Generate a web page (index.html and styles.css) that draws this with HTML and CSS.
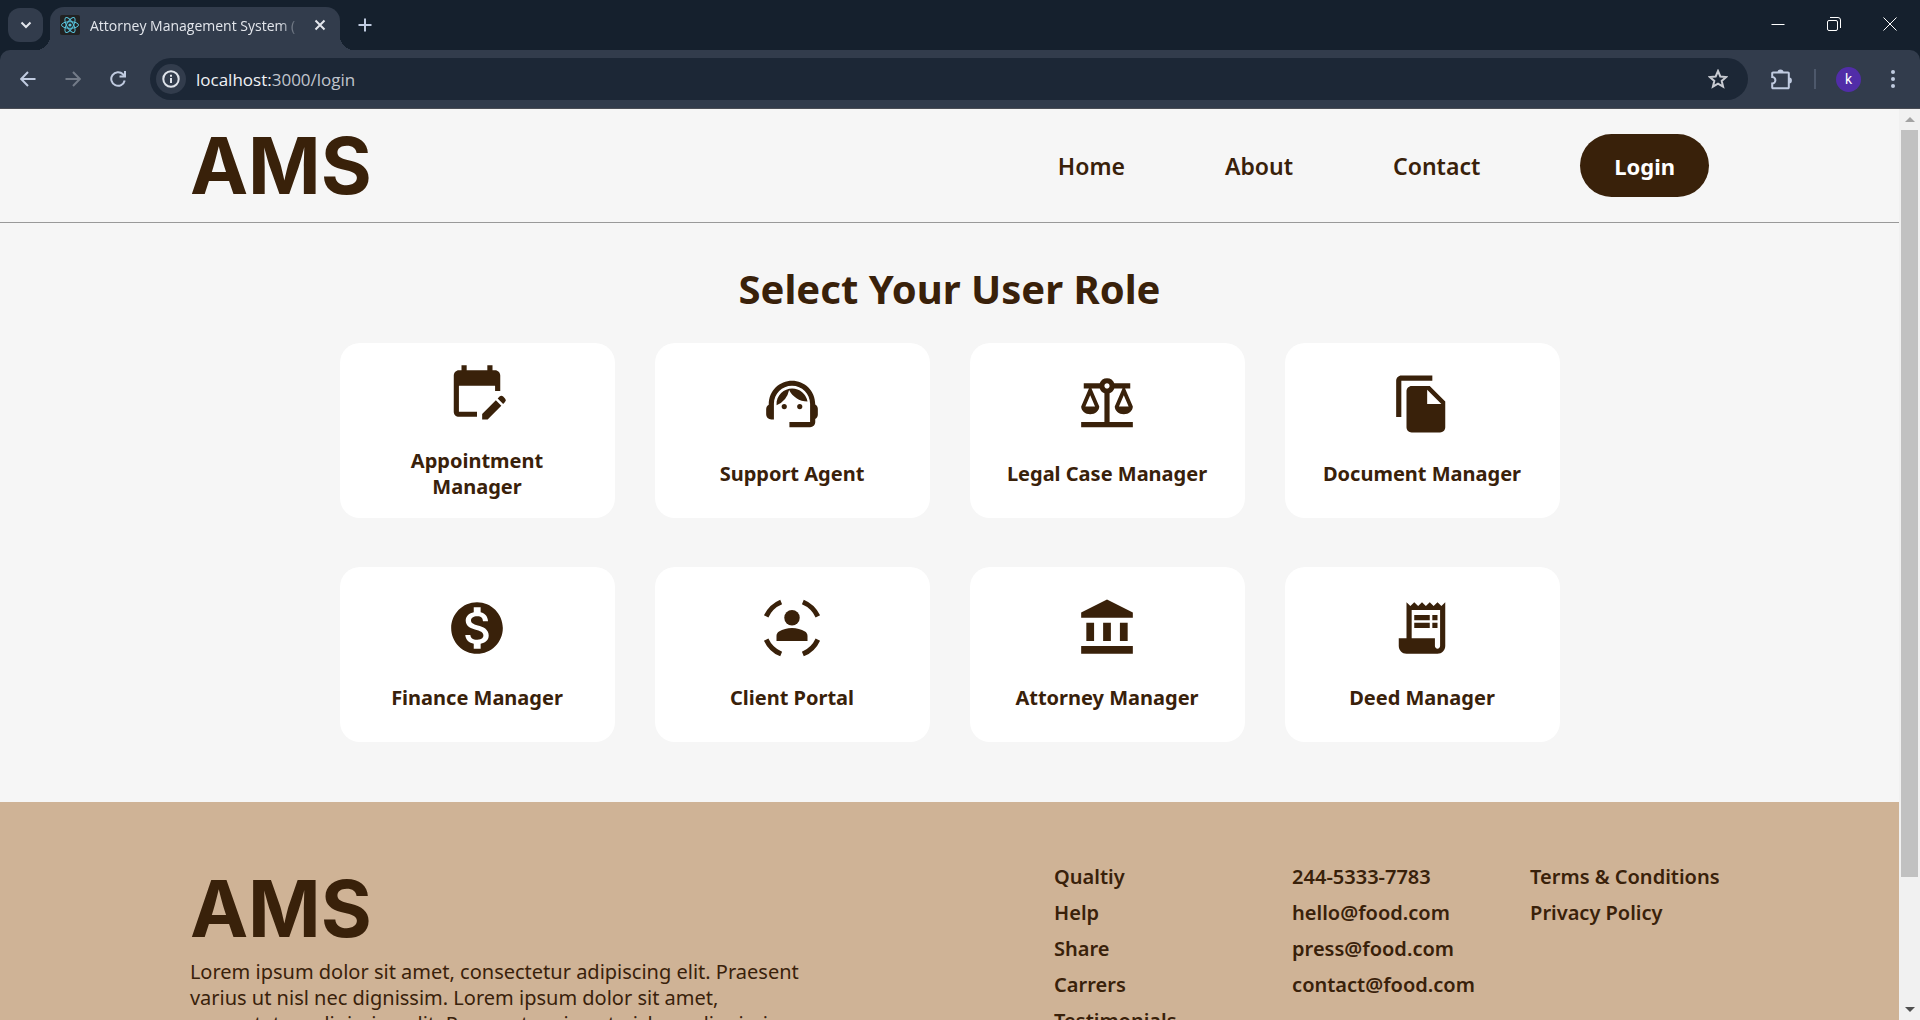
FILE: index.html
```html
<!DOCTYPE html>
<html lang="en">
<head>
<meta charset="utf-8">
<title>Attorney Management System</title>
<link rel="stylesheet" href="styles.css">
</head>
<body>
<div class="window">
  <div class="tabstrip">
    <button class="tab-search" aria-label="Search tabs"><svg width="16" height="16" viewBox="0 0 16 16" class="line thick"><path d="M3.500 5.500L8 10l4.500-4.500"/></svg></button>
    <div class="tab">
      <svg class="favicon" width="20" height="20" viewBox="0 0 20 20"><rect width="20" height="20" rx="2" fill="#222"/><g fill="none" stroke="#58c4dc" stroke-width="1"><ellipse cx="10" cy="10" rx="8.500" ry="3.300"/><ellipse cx="10" cy="10" rx="8.500" ry="3.300" transform="rotate(60 10 10)"/><ellipse cx="10" cy="10" rx="8.500" ry="3.300" transform="rotate(120 10 10)"/></g><circle cx="10" cy="10" r="1.600" fill="#58c4dc"/></svg>
      <span class="tab-title">Attorney Management System (</span>
      <button class="tab-close" aria-label="Close tab"><svg width="12" height="12" viewBox="0 0 12 12" class="line"><path d="M1.500 1.500l9 9M10.500 1.500l-9 9"/></svg></button>
    </div>
    <button class="icon-btn new-tab" aria-label="New tab"><svg width="14" height="14" viewBox="0 0 14 14" class="line"><path d="M7 .5v13M.5 7h13"/></svg></button>
    <div class="window-controls">
      <button aria-label="Minimize"><svg width="14" height="14" viewBox="0 0 14 14" class="hair"><path d="M.5 7.500h13"/></svg></button>
      <button aria-label="Restore"><svg width="14" height="14" viewBox="0 0 14 14" class="hair"><rect x=".5" y="3.500" width="10" height="10" rx="1.500"/><path d="M3 .5h8a2.500 2.500 0 0 1 2.500 2.500v8"/></svg></button>
      <button aria-label="Close"><svg width="14" height="14" viewBox="0 0 14 14" class="hair"><path d="M.5.5l13 13M13.500.5l-13 13"/></svg></button>
    </div>
  </div>

  <div class="toolbar">
    <div class="nav-buttons">
      <button class="icon-btn" aria-label="Back"><svg width="16" height="16" viewBox="0 0 16 16" class="line"><path d="M15.500 8H1.500M8 1L1.200 8 8 15"/></svg></button>
      <button class="icon-btn dim" aria-label="Forward"><svg width="16" height="16" viewBox="0 0 16 16" class="line"><path d="M.5 8h14M8 1l6.800 7L8 15"/></svg></button>
      <button class="icon-btn" aria-label="Reload"><svg width="16" height="16" viewBox="0 0 16 16" class="line"><path d="M14.700 9.500A6.800 6.800 0 1 1 13 3.300L14.800 5M15 0v5.500H9.500"/></svg></button>
    </div>
    <div class="omnibox">
      <button class="site-info" aria-label="Site information"><svg width="18" height="18" viewBox="0 0 18 18" class="line"><circle cx="9" cy="9" r="7.700"/><path d="M9 8v5M9 4.800v1.900"/></svg></button>
      <span class="url"><span class="host">localhost:</span>3000/login</span>
      <button class="icon-btn star" aria-label="Bookmark"><svg width="20" height="20" viewBox="0 0 20 20" class="line"><path d="M10 2l2.300 5.500 5.900.5-4.500 3.900 1.400 5.800L10 14.600l-5.100 3.100 1.400-5.800L1.800 8l5.900-.5z"/></svg></button>
    </div>
    <button class="icon-btn" aria-label="Extensions"><svg width="22" height="22" viewBox="0 0 22 22" class="line"><path d="M2 4.500h15a.8.8 0 0 1 .8.8V19.500a.8.8 0 0 1-.8.8H2a.8.8 0 0 1-.8-.8v-4a3.200 3.200 0 0 0 0-6.400V5.300a.8.8 0 0 1 .8-.8z"/><path d="M7.500 4a2 1.600 0 0 1 4 0zM18.300 10.500a1.600 2 0 0 1 0 4z" fill="currentColor"/></svg></button>
    <span class="divider"></span>
    <button class="avatar" aria-label="Profile">k</button>
    <button class="icon-btn" aria-label="Menu"><svg width="6" height="20" viewBox="0 0 6 20" fill="currentColor"><circle cx="3" cy="3" r="2"/><circle cx="3" cy="10" r="2"/><circle cx="3" cy="17" r="2"/></svg></button>
  </div>

  <div class="viewport">
    <div class="page">
      <header class="header">
        <a class="logo" href="#">AMS</a>
        <nav class="nav">
          <a href="#">Home</a>
          <a href="#">About</a>
          <a href="#">Contact</a>
          <button class="login">Login</button>
        </nav>
      </header>

      <main class="roles">
        <h1>Select Your User Role</h1>
        <div class="grid">
          <a class="card" href="#"><svg viewBox="0 0 24 24"><path d="M12 22H5c-1.110 0-2-.9-2-2L3.010 6c0-1.100.88-2 1.990-2h1V2h2v2h8V2h2v2h1c1.100 0 2 .9 2 2v6h-2v-2H5v10h7v2zm10.130-5.010l.71-.71a.996.996 0 0 0 0-1.410l-.71-.71a.996.996 0 0 0-1.410 0l-.71.71 2.120 2.120zm-.71.71l-5.300 5.300H14v-2.120l5.300-5.300 2.120 2.120z"/></svg><span>Appointment Manager</span></a>
          <a class="card" href="#"><svg viewBox="0 0 24 24"><path d="M21 12.220C21 6.730 16.740 3 12 3c-4.690 0-9 3.650-9 9.280-.6.34-1 .98-1 1.720v2c0 1.100.9 2 2 2h1v-6.100c0-3.870 3.130-7 7-7s7 3.130 7 7V19h-8v2h8c1.100 0 2-.9 2-2v-1.220c.59-.31 1-.92 1-1.640v-2.300c0-.7-.41-1.310-1-1.620z"/><circle cx="9" cy="13" r="1"/><circle cx="15" cy="13" r="1"/><path d="M18 11.030A6.040 6.040 0 0 0 12.050 6c-3.030 0-6.290 2.510-6.030 6.450a8.075 8.075 0 0 0 4.860-5.890c1.310 2.630 4 4.440 7.120 4.470z"/></svg><span>Support Agent</span></a>
          <a class="card" href="#"><svg viewBox="0 0 24 24"><path fill-rule="evenodd" d="M13 7.830c.85-.3 1.530-.98 1.830-1.830H18l-3 7c0 1.660 1.570 3 3.500 3s3.500-1.340 3.500-3l-3-7h2V4h-6.170a3.005 3.005 0 0 0-5.660 0H3v2h2l-3 7c0 1.660 1.570 3 3.500 3S9 14.660 9 13L6 6h3.170c.3.85.98 1.530 1.830 1.830V19H2v2h20v-2h-9V7.830zM20.370 13h-3.740l1.870-4.360L20.370 13zm-13 0H3.630L5.500 8.640 7.370 13zM12 6c-.55 0-1-.45-1-1s.45-1 1-1 1 .45 1 1-.45 1-1 1z"/></svg><span>Legal Case Manager</span></a>
          <a class="card" href="#"><svg viewBox="0 0 24 24"><path d="M16 1H4c-1.100 0-2 .9-2 2v14h2V3h12V1zm-1 4l6 6v10c0 1.100-.9 2-2 2H7.990C6.890 23 6 22.100 6 21V7c0-1.100.89-2 1.990-2h7zm-1 7h5.500L14 6.500V12z"/></svg><span>Document Manager</span></a>
          <a class="card" href="#"><svg viewBox="0 0 24 24"><path d="M12 2C6.480 2 2 6.480 2 12s4.480 10 10 10 10-4.480 10-10S17.520 2 12 2zm1.410 16.090V20h-2.670v-1.930c-1.710-.36-3.160-1.460-3.270-3.400h1.960c.1 1.050.82 1.870 2.650 1.870 1.960 0 2.400-.98 2.400-1.590 0-.83-.44-1.610-2.670-2.140-2.480-.6-4.180-1.620-4.180-3.670 0-1.720 1.390-2.840 3.110-3.210V4h2.670v1.950c1.860.45 2.790 1.860 2.850 3.390H14.300c-.05-1.110-.64-1.870-2.220-1.870-1.500 0-2.400.68-2.400 1.640 0 .84.65 1.390 2.670 1.910s4.180 1.390 4.180 3.910c-.01 1.830-1.380 2.830-3.120 3.160z"/></svg><span>Finance Manager</span></a>
          <a class="card" href="#"><svg viewBox="0 0 24 24"><circle cx="12" cy="8" r="3"/><path d="M12 12c-1.840 0-3.560.5-5.030 1.370-.61.35-.97 1.020-.97 1.720V17h12v-1.910c0-.7-.36-1.370-.97-1.720C15.560 12.500 13.840 12 12 12z"/><path fill="none" stroke="currentColor" stroke-width="1.900" d="M2 7.500A11 11 0 0 1 7.800 1.900M16.200 1.900A11 11 0 0 1 22 7.500M22 16.500A11 11 0 0 1 16.200 22.100M7.800 22.100A11 11 0 0 1 2 16.500"/></svg><span>Client Portal</span></a>
          <a class="card" href="#"><svg viewBox="0 0 24 24"><path d="M4 10h3v7H4zM10.500 10h3v7h-3zM17 10h3v7h-3zM2 19h20v3H2zM12 1L2 6v2h20V6z"/></svg><span>Attorney Manager</span></a>
          <a class="card" href="#"><svg viewBox="0 0 24 24"><path fill-rule="evenodd" d="M19.500 3.500L18 2l-1.500 1.500L15 2l-1.500 1.500L12 2l-1.500 1.500L9 2 7.500 3.500 6 2v14H3v3c0 1.660 1.340 3 3 3h12c1.660 0 3-1.340 3-3V2l-1.500 1.500zM19 19c0 .55-.45 1-1 1s-1-.45-1-1v-3H8V5h11v14z"/><path d="M9 7h6v2H9zM16 7h2v2h-2zM9 10h6v2H9zM16 10h2v2h-2z"/></svg><span>Deed Manager</span></a>
        </div>
      </main>

      <footer class="footer">
        <div class="about">
          <a class="logo" href="#">AMS</a>
          <p>Lorem ipsum dolor sit amet, consectetur adipiscing elit. Praesent varius ut nisl nec dignissim. Lorem ipsum dolor sit amet, consectetur adipiscing elit. Praesent varius ut nisl nec dignissim.</p>
        </div>
        <div class="links">
          <ul><li><a href="#">Qualtiy</a></li><li><a href="#">Help</a></li><li><a href="#">Share</a></li><li><a href="#">Carrers</a></li><li><a href="#">Testimonials</a></li></ul>
          <ul><li><a href="#">244-5333-7783</a></li><li><a href="#">hello@food.com</a></li><li><a href="#">press@food.com</a></li><li><a href="#">contact@food.com</a></li></ul>
          <ul><li><a href="#">Terms &amp; Conditions</a></li><li><a href="#">Privacy Policy</a></li></ul>
        </div>
      </footer>
    </div>
    <div class="scrollbar">
      <span class="arrow up"></span>
      <div class="track"><div class="thumb"></div></div>
      <span class="arrow down"></span>
    </div>
  </div>
</div>
</body>
</html>
```
FILE: styles.css
```css
* { box-sizing: border-box; }

body {
  margin: 0;
  font-family: "Noto Sans", "Open Sans", sans-serif;
  color: #39210a;
}

button {
  border: 0;
  padding: 0;
  background: none;
  color: inherit;
  font: inherit;
}

a { color: inherit; text-decoration: none; }

.window {
  display: flex;
  flex-direction: column;
  height: 100vh;
  overflow: hidden;
  background: #15202d;
}

/* Browser frame */
.tabstrip {
  display: flex;
  align-items: flex-start;
  height: 50px;
  flex: none;
  padding-left: 8px;
  color: #e3e6ec;
}

.tab-search {
  display: grid;
  place-items: center;
  width: 35px;
  height: 34px;
  margin: 8px 7px 0 0;
  border-radius: 12px;
  background: #323c4c;
}

.tab {
  position: relative;
  display: flex;
  align-items: center;
  width: 290px;
  height: 43px;
  margin-top: 7px;
  padding: 0 10px 7px;
  border-radius: 14px 14px 0 0;
  background: #323c4c;
}

.tab::before,
.tab::after {
  content: "";
  position: absolute;
  bottom: 0;
  width: 14px;
  height: 14px;
}

.tab::before {
  right: 100%;
  background: radial-gradient(circle at 0 0, transparent 14px, #323c4c 14px);
}

.tab::after {
  left: 100%;
  background: radial-gradient(circle at 100% 0, transparent 14px, #323c4c 14px);
}

.tab-title {
  flex: 1;
  margin: 0 10px;
  overflow: hidden;
  white-space: nowrap;
  font-family: "Open Sans", sans-serif;
  font-size: 14px;
  -webkit-mask-image: linear-gradient(to right, #000 90%, transparent);
  mask-image: linear-gradient(to right, #000 90%, transparent);
}

.tab-close {
  display: grid;
  place-items: center;
  width: 20px;
  height: 20px;
}

.icon-btn {
  display: grid;
  place-items: center;
  flex: none;
  width: 34px;
  height: 34px;
  color: #c0cbe0;
}

.new-tab { margin: 8px 0 0 8px; }
.dim { color: #737b88; }

.line { fill: none; stroke: currentColor; stroke-width: 2; }
.hair { fill: none; stroke: #fff; stroke-width: 1; }

.window-controls { display: flex; margin-left: auto; }

.window-controls button {
  display: grid;
  place-items: center;
  width: 56px;
  height: 48px;
}

.window-controls { padding-right: 2px; }

.toolbar {
  display: flex;
  align-items: center;
  flex: none;
  height: 59px;
  padding: 0 10px 0 11px;
  border-bottom: 1px solid #4a4d55;
  border-radius: 10px 10px 0 0;
  background: #323c4c;
}

.nav-buttons { display: flex; gap: 11px; }

.omnibox {
  display: flex;
  align-items: center;
  flex: 1;
  height: 42px;
  margin: 0 17px 0 15px;
  padding: 0 13px 0 6px;
  border-radius: 21px;
  background: #1c2736;
}

.site-info {
  display: grid;
  place-items: center;
  width: 30px;
  height: 30px;
  margin-right: 10px;
  border-radius: 50%;
  background: #323c4c;
  color: #dfe3ea;
}

.url {
  flex: 1;
  font-family: "Open Sans", sans-serif;
  font-size: 17px;
  color: #c0c5cd;
}

.host { color: #f0f2f5; }
.star { color: #c8cbd2; }

.divider { width: 2px; height: 20px; margin: 0 20px 0 15px; background: #4d586b; }

.avatar {
  width: 25px;
  height: 25px;
  margin-right: 15px;
  border-radius: 50%;
  background: #512da8;
  color: #fff;
  font-family: Roboto, sans-serif;
  font-size: 14px;
}

/* Page area */
.viewport { display: flex; flex: 1; min-height: 0; }
.page { flex: 1; min-width: 0; overflow: hidden; background: #f6f6f6; }

.header {
  display: flex;
  align-items: center;
  justify-content: space-between;
  height: 114px;
  padding: 0 10%;
  border-bottom: 1px solid #999;
}

.logo {
  font-family: Inter, sans-serif;
  font-size: 78px;
  font-weight: 700;
  line-height: 96px;
}

.nav {
  display: flex;
  align-items: center;
  gap: 100px;
  font-size: 23px;
  font-weight: 600;
}

.login {
  height: 63px;
  padding: 0 34px;
  border-radius: 32px;
  background: #39210a;
  color: #fff;
  font-size: 22px;
  font-weight: 700;
}

.roles { padding: 41px 0 60px; }

.roles h1 {
  margin: 0 0 29px;
  font-size: 40px;
  font-weight: 700;
  line-height: 50px;
  text-align: center;
}

.grid {
  display: grid;
  grid-template-columns: repeat(4, 275px);
  justify-content: center;
  gap: 49px 40px;
}

.card {
  display: flex;
  flex-direction: column;
  align-items: center;
  justify-content: center;
  gap: 26px;
  height: 175px;
  padding: 0 30px 2px;
  border-radius: 20px;
  background: #fff;
  font-size: 20px;
  font-weight: 700;
  line-height: 26px;
  text-align: center;
}

.card svg { width: 62px; height: 62px; fill: currentColor; flex: none; }

.footer {
  display: flex;
  justify-content: space-between;
  padding: 57px 9% 60px 10%;
  background: #cfb396;
}

.about { width: 635px; padding-top: 2px; }
.about .logo { display: block; }
.about p { margin: 2px 0 0; font-size: 20px; line-height: 26px; }

.links {
  display: grid;
  grid-template-columns: repeat(3, 198px);
  column-gap: 40px;
  font-size: 20px;
  font-weight: 600;
  line-height: 36px;
  white-space: nowrap;
}

.links ul { margin: 0; padding: 0; list-style: none; }

.scrollbar {
  display: flex;
  flex-direction: column;
  flex: none;
  width: 21px;
  background: #f1f1f1;
}

.arrow { display: grid; place-items: center; height: 21px; }
.arrow::before { content: ""; border: 5px solid transparent; }
.up::before { border-top: 0; border-bottom-color: #a3a3a3; }
.down::before { border-bottom: 0; border-top-color: #505050; }
.track { flex: 1; padding: 0 2px; }
.thumb { height: 86%; background: #c1c1c1; }
```
